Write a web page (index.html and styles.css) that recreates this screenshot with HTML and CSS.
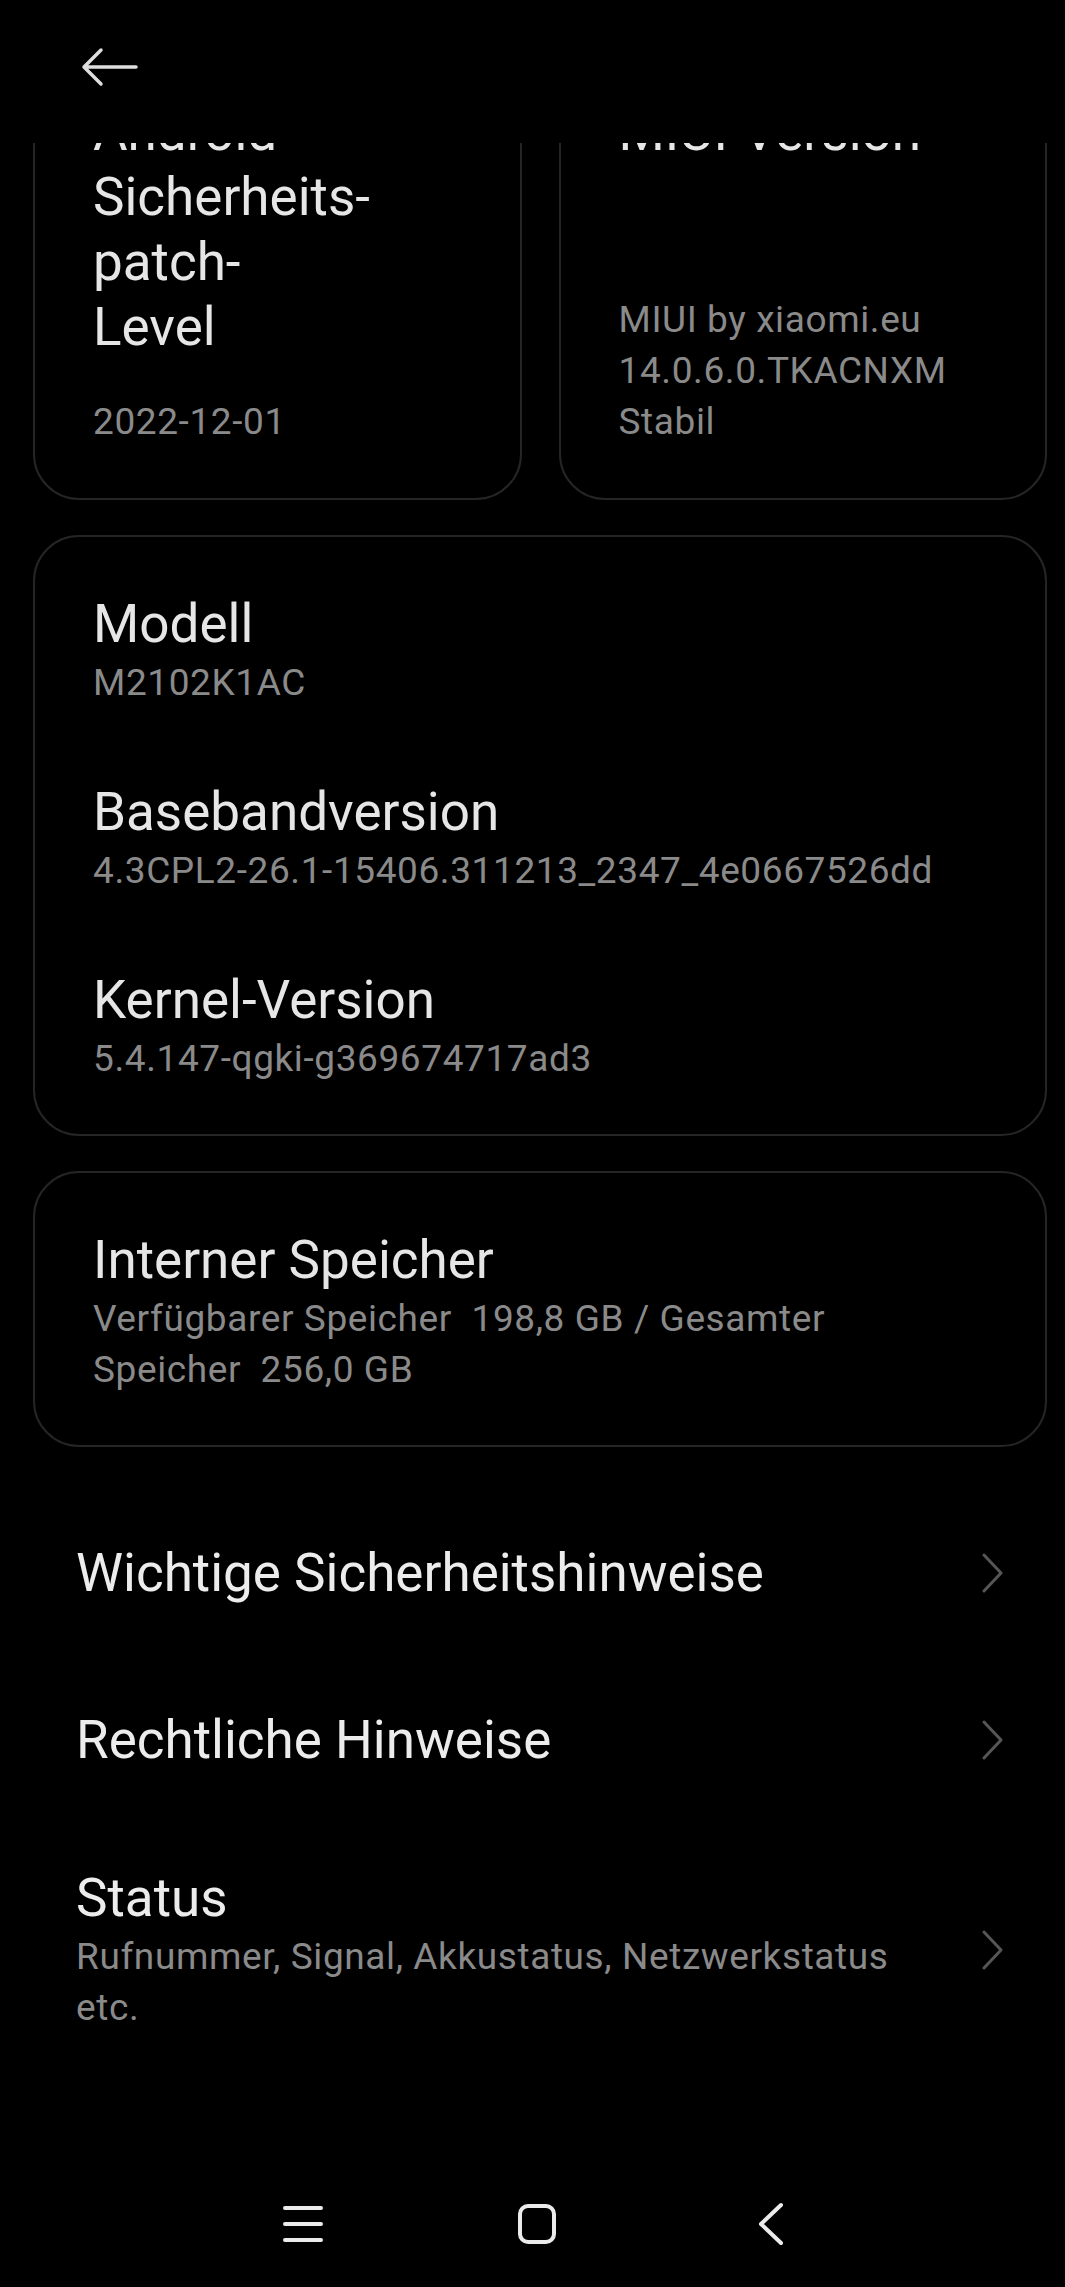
FILE: index.html
```html
<!DOCTYPE html>
<html>
  <head>
    <meta charset="UTF-8">
    <title>Über das Telefon</title>
    <link rel="stylesheet" href="styles.css">
  </head>
  <body>
    <div class="app">

    <div class="topbar">
      <svg class="back" width="58" height="40" viewBox="0 0 58 40">
        <path d="M4 20 H56 M21 3 L4 20 L21 37" fill="none" stroke="#dedede" stroke-width="3.5" stroke-linecap="round" stroke-linejoin="round"/>
      </svg>
    </div>

    <div class="scroll">
    <div class="content">

      <div class="tiles">
        <div class="card tile">
          <div class="tile-title">Android Sicherheits-<br>patch-<br>Level</div>
          <div class="sub">2022-12-01</div>
        </div>
        <div class="card tile">
          <div class="tile-title">MIUI-Version</div>
          <div class="sub">MIUI by xiaomi.eu<br>14.0.6.0.TKACNXM<br>Stabil</div>
        </div>
      </div>

      <div class="card">
        <div class="item">
          <div class="title">Modell</div>
          <div class="sub">M2102K1AC</div>
        </div>
        <div class="item">
          <div class="title">Basebandversion</div>
          <div class="sub">4.3CPL2-26.1-15406.311213_2347_4e0667526dd</div>
        </div>
        <div class="item">
          <div class="title">Kernel-Version</div>
          <div class="sub">5.4.147-qgki-g369674717ad3</div>
        </div>
      </div>

      <div class="card">
        <div class="item">
          <div class="title">Interner Speicher</div>
          <div class="sub">Verfügbarer Speicher&nbsp; 198,8 GB / Gesamter Speicher&nbsp; 256,0 GB</div>
        </div>
      </div>

      <div class="list">
        <div class="row single">
          <div class="row-text"><div class="title">Wichtige Sicherheitshinweise</div></div>
          <svg class="chev" width="22" height="40" viewBox="0 0 22 40"><path d="M2 2 L19 20 L2 38" fill="none" stroke="#565656" stroke-width="3" stroke-linecap="round" stroke-linejoin="round"/></svg>
        </div>
        <div class="row single">
          <div class="row-text"><div class="title">Rechtliche Hinweise</div></div>
          <svg class="chev" width="22" height="40" viewBox="0 0 22 40"><path d="M2 2 L19 20 L2 38" fill="none" stroke="#565656" stroke-width="3" stroke-linecap="round" stroke-linejoin="round"/></svg>
        </div>
        <div class="row status">
          <div class="row-text">
            <div class="title">Status</div>
            <div class="sub">Rufnummer, Signal, Akkustatus, Netzwerkstatus etc.</div>
          </div>
          <svg class="chev" width="22" height="40" viewBox="0 0 22 40"><path d="M2 2 L19 20 L2 38" fill="none" stroke="#565656" stroke-width="3" stroke-linecap="round" stroke-linejoin="round"/></svg>
        </div>
      </div>

    </div>
    </div>

    <div class="navbar">
      <svg width="48" height="48" viewBox="0 0 48 48"><path d="M6 8 H42 M6 24 H42 M6 40 H42" stroke="#ebebeb" stroke-width="4" stroke-linecap="round"/></svg>
      <svg width="48" height="48" viewBox="0 0 48 48"><rect x="7" y="6" width="34" height="36" rx="8" fill="none" stroke="#ebebeb" stroke-width="4"/></svg>
      <svg width="48" height="48" viewBox="0 0 48 48"><path d="M34 5 L14 24 L34 43" fill="none" stroke="#ebebeb" stroke-width="4" stroke-linecap="round" stroke-linejoin="round"/></svg>
    </div>

    </div>
  </body>
</html>
```

FILE: styles.css
```css
html,body {
  margin:0;
  padding:0;
  background:#000;
  font-family:Roboto, "Noto Sans", sans-serif;
  color:#e6e6e6;
}

.app {
  display:flex;
  flex-direction:column;
  height:2287px;
  overflow:hidden;
}

.topbar {
  height:143px;
  flex:none;
  padding:47px 0 0 80px;
  box-sizing:border-box;
  background:#000;
}
.back { display:block; }

.scroll {
  flex:1;
  overflow:hidden;
}
/* page is scrolled a bit, first cards run under the header */
.content {
  margin-top:-101px;
  padding:0 18px 0 33px;
}

.card {
  border:2px solid #252525;
  border-radius:46px;
  padding:56px 58px 50px 58px;
  margin-bottom:35px;
}

.tiles {
  display:grid;
  grid-template-columns:1fr 1fr;
  gap:37px;
}
.tile {
  display:flex;
  flex-direction:column;
  justify-content:space-between;
  padding-bottom:51px;
}
.tile-title {
  font-size:53px;
  line-height:65px;
  margin-bottom:36px;
  color:#e6e6e6;
}

.title {
  font-size:53px;
  line-height:62px;
  color:#e6e6e6;
}
.sub {
  font-size:37px;
  line-height:51px;
  letter-spacing:0.6px;
  color:#8a8a8a;
}
.item .sub { margin-top:2px; }
.item + .item { margin-top:73px; }

.list {
  margin:42px 35px 0 43px;
}
.row {
  display:flex;
  align-items:center;
  padding:48px 0;
}
.row.single .row-text {
  min-height:71px;
  display:flex;
  align-items:center;
}
.row.status { padding-top:44px; }
.row .title { color:#ececec; }
.row .sub { margin-top:2px; }
.row-text {
  flex:1;
  margin-right:40px;
}
.chev { flex:none; display:block; margin-right:8px; }

.navbar {
  flex:none;
  height:126px;
  display:flex;
  align-items:center;
  justify-content:center;
  gap:186px;
  padding-left:9px;
}
.navbar svg { display:block; }
```
